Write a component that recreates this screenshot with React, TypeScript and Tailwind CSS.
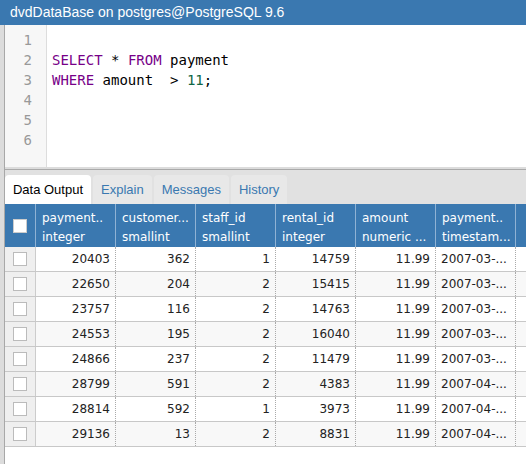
const rows = [
  ['20403', '362', '1', '14759', '11.99', '2007-03-...'],
  ['22650', '204', '2', '15415', '11.99', '2007-03-...'],
  ['23757', '116', '2', '14763', '11.99', '2007-03-...'],
  ['24553', '195', '2', '16040', '11.99', '2007-03-...'],
  ['24866', '237', '2', '11479', '11.99', '2007-03-...'],
  ['28799', '591', '2', '4383', '11.99', '2007-04-...'],
  ['28814', '592', '1', '3973', '11.99', '2007-04-...'],
  ['29136', '13', '2', '8831', '11.99', '2007-04-...'],
]

const columns = [
  ['payment..', 'integer'],
  ['customer...', 'smallint'],
  ['staff_id', 'smallint'],
  ['rental_id', 'integer'],
  ['amount', 'numeric ...'],
  ['payment..', 'timestam...'],
]

const sans = "font-['Liberation_Sans',Arial,sans-serif]"
const verdana = "font-['DejaVu_Sans',Verdana,sans-serif]"

function CodeLine({ n, children }: { n: number; children?: React.ReactNode }) {
  return (
    <div className="flex h-[20px] items-center">
      <div className="w-[42px] pr-[15px] text-right text-[#999]">{n}</div>
      <div className="pl-[5px] whitespace-pre">{children}</div>
    </div>
  )
}

export default function App() {
  return (
    <div className={`w-[526px] h-[464px] overflow-hidden bg-white flex flex-col ${sans}`}>
      <div className="h-[25px] shrink-0 bg-[#3a78b0] text-white text-[14px] flex items-center pl-[10px]">
        dvdDataBase on postgres@PostgreSQL 9.6
      </div>
      <div className="flex flex-1 min-h-0">
        <div className="w-[5px] shrink-0 bg-[#dcdcdc] border-r border-[#a8a8a8]" />
        <div className="flex-1 flex flex-col min-w-0">
          <div className="h-[142px] shrink-0 relative font-['DejaVu_Sans_Mono',monospace] text-[14px] pt-[5px]">
            <div className="absolute left-0 top-0 bottom-0 w-[42px] bg-[#f7f7f7] border-r border-[#ddd]" />
            <div className="relative">
              <CodeLine n={1} />
              <CodeLine n={2}>
                <span className="text-[#770088]">SELECT</span> * <span className="text-[#770088]">FROM</span> payment
              </CodeLine>
              <CodeLine n={3}>
                <span className="text-[#770088]">WHERE</span> amount  &gt; <span className="text-[#116644]">11</span>;
              </CodeLine>
              <CodeLine n={4} />
              <CodeLine n={5} />
              <CodeLine n={6} />
            </div>
          </div>
          <div className="h-[3px] bg-[#dcdcdc] border-b border-[#aaa] shrink-0" />
          <div className="h-[34px] shrink-0 bg-[#e1e1e1] flex items-end gap-[2px] text-[13px]">
            <div className="h-[29px] w-[86px] bg-white rounded-t-[4px] flex items-center justify-center text-black">Data Output</div>
            {['Explain', 'Messages', 'History'].map((t) => (
              <div key={t} className="h-[29px] px-[8px] bg-[#e8e8e8] rounded-t-[4px] flex items-center text-[#3a78b0]">
                {t}
              </div>
            ))}
          </div>
          <div className={`${verdana} text-[12px]`}>
            <div className="flex h-[43px] bg-[#3a78b0] text-white">
              <div className="w-[31px] shrink-0 border-r border-[#8fb2d4] flex items-center justify-center">
                <div className="w-[14px] h-[14px] bg-white border border-[#ccc]" />
              </div>
              {columns.map((c, i) => (
                <div key={i} className="w-[80px] shrink-0 border-r border-[#8fb2d4] px-[6px] pt-[5px] leading-[19px]">
                  <div>{c[0]}</div>
                  <div>{c[1]}</div>
                </div>
              ))}
              <div className="w-[80px] shrink-0" />
            </div>
            {rows.map((r, i) => (
              <div key={i} className={`flex h-[25px] border-b border-[#c8c8c8] text-[#222] ${i % 2 ? 'bg-[#f8f8f8]' : 'bg-white'}`}>
                <div className="w-[31px] shrink-0 bg-[#efefef] border-r border-[#ccc] flex items-center justify-center">
                  <div className="w-[14px] h-[14px] bg-white border border-[#bbb]" />
                </div>
                {r.map((v, j) => (
                  <div
                    key={j}
                    className={`w-[80px] shrink-0 border-r border-dotted border-[#aaa] px-[5px] flex items-center ${j === 5 ? 'justify-start' : 'justify-end'}`}
                  >
                    {v}
                  </div>
                ))}
              </div>
            ))}
          </div>
        </div>
      </div>
    </div>
  )
}
